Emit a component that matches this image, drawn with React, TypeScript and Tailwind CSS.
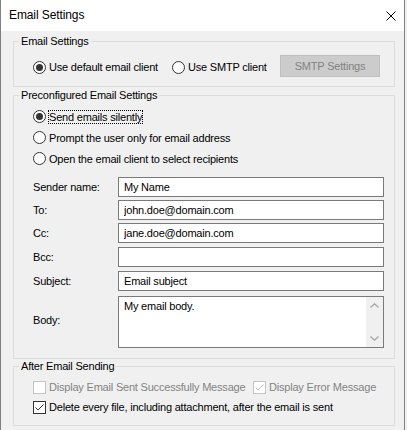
import React from "react";

function Radio({ checked }: { checked?: boolean }) {
  return (
    <svg width="13" height="13" viewBox="0 0 13 13" className="shrink-0">
      <circle cx="6.5" cy="6.5" r="6" fill="#ffffff" stroke="#333333" strokeWidth="1" />
      {checked && <circle cx="6.5" cy="6.5" r="3.5" fill="#333333" />}
    </svg>
  );
}

function Check({ checked, disabled }: { checked?: boolean; disabled?: boolean }) {
  const c = disabled ? "#c4c4c4" : "#333333";
  return (
    <svg width="13" height="13" viewBox="0 0 13 13" className="shrink-0">
      <rect x="0.5" y="0.5" width="12" height="12" fill="#ffffff" stroke={c} strokeWidth="1" />
      {checked && <path d="M2.5 6.5 L5 9 L10.5 3.5" fill="none" stroke={c} strokeWidth="1" />}
    </svg>
  );
}

function RadioRow({ label, checked, focused, className }: { label: string; checked?: boolean; focused?: boolean; className?: string }) {
  return (
    <div className={"flex items-center gap-[2px] " + (className ?? "")}>
      <Radio checked={checked} />
      <span
        className={
          "border leading-[12px] whitespace-nowrap " +
          (focused ? "border-dotted border-black" : "border-transparent")
        }
      >
        {label}
      </span>
    </div>
  );
}

function Field({ label, value, className }: { label: string; value: string; className?: string }) {
  return (
    <div className={"flex items-center " + (className ?? "")}>
      <div className="w-[85px] shrink-0">{label}</div>
      <input
        readOnly
        defaultValue={value}
        className="flex-1 min-w-0 h-[20px] border border-[#7a7a7a] bg-white px-[5px] text-[11px] tracking-[-0.2px] text-black outline-none font-['Liberation_Sans',Arial,sans-serif]"
      />
    </div>
  );
}

export default function App() {
  return (
    <div className="w-[407px] h-[430px] bg-[#f0f0f0] font-['Liberation_Sans',Arial,sans-serif] text-[11px] tracking-[-0.2px] leading-[15px] text-black overflow-hidden">
      <div className="w-[405px] h-full border-l border-r border-[#808080] flex flex-col">
        <div className="h-[31px] shrink-0 bg-white flex items-center justify-between pl-[8px] pr-[8px]">
          <span className="text-[12px] tracking-[-0.1px]">Email Settings</span>
          <svg width="10" height="10" viewBox="0 0 10 10">
            <path d="M0.5 0.5 L9.5 9.5 M9.5 0.5 L0.5 9.5" stroke="#000000" strokeWidth="1" fill="none" />
          </svg>
        </div>
        <div className="flex-1 pl-[12px] pr-[9px]">
          {/* Group 1 */}
          <fieldset className="mt-[3px] border border-[#dcdcdc]">
            <legend className="ml-[5px] px-[2px] h-[15px] leading-[15px]">Email Settings</legend>
            <div className="pl-[19px] pr-[10px] pt-[6px] pb-[9px] flex items-start">
              <RadioRow label="Use default email client" checked className="w-[139px] h-[22px] pt-[2px]" />
              <RadioRow label="Use SMTP client" className="w-[108px] h-[22px] pt-[2px]" />
              <button className="w-[100px] h-[22px] bg-[#cccccc] border border-[#bfbfbf] text-[#838383] text-[11px] leading-[15px]">
                SMTP Settings
              </button>
            </div>
          </fieldset>

          {/* Group 2 */}
          <fieldset className="mt-[1px] border border-[#dcdcdc]">
            <legend className="ml-[5px] px-[2px] h-[15px] leading-[15px]">Preconfigured Email Settings</legend>
            <div className="pl-[19px] pr-[10px] pt-[3px] pb-[10px] flex flex-col">
              <RadioRow label="Send emails silently" checked focused className="h-[21px]" />
              <RadioRow label="Prompt the user only for email address" className="h-[21px]" />
              <RadioRow label="Open the email client to select recipients" className="h-[21px]" />
              <Field label="Sender name:" value="My Name" className="mt-[8px]" />
              <Field label="To:" value="john.doe@domain.com" className="mt-[3px]" />
              <Field label="Cc:" value="jane.doe@domain.com" className="mt-[3px]" />
              <Field label="Bcc:" value="" className="mt-[4px]" />
              <Field label="Subject:" value="Email subject" className="mt-[4px]" />
              <div className="mt-[5px] h-[52px] flex items-center">
                <div className="w-[85px] shrink-0 mb-[3px]">Body:</div>
                <div className="flex-1 h-full border border-[#7a7a7a] bg-white flex">
                  <div className="flex-1 pl-[5px] pt-[2px]">My email body.</div>
                  <div className="w-[17px] bg-[#f0f0f0] flex flex-col justify-between">
                    <div className="h-[17px] flex items-center justify-center">
                      <svg width="9" height="5" viewBox="0 0 9 5">
                        <path d="M0.5 4.5 L4.5 0.8 L8.5 4.5" fill="none" stroke="#a3a3a3" strokeWidth="1.2" />
                      </svg>
                    </div>
                    <div className="h-[17px] flex items-center justify-center">
                      <svg width="9" height="5" viewBox="0 0 9 5">
                        <path d="M0.5 0.5 L4.5 4.2 L8.5 0.5" fill="none" stroke="#a3a3a3" strokeWidth="1.2" />
                      </svg>
                    </div>
                  </div>
                </div>
              </div>
            </div>
          </fieldset>

          {/* Group 3 */}
          <fieldset className="border border-[#dcdcdc]">
            <legend className="ml-[5px] px-[2px] h-[15px] leading-[15px]">After Email Sending</legend>
            <div className="pl-[19px] pr-[10px] pt-[3px] pb-[8px] flex flex-col">
              <div className="h-[20px] flex items-center">
                <div className="w-[220px] flex items-center gap-[3px] text-[#838383]">
                  <Check disabled />
                  <span className="whitespace-nowrap">Display Email Sent Successfully Message</span>
                </div>
                <div className="flex items-center gap-[3px] text-[#838383]">
                  <Check disabled checked />
                  <span className="whitespace-nowrap">Display Error Message</span>
                </div>
              </div>
              <div className="h-[20px] flex items-center gap-[3px]">
                <Check checked />
                <span className="whitespace-nowrap">Delete every file, including attachment, after the email is sent</span>
              </div>
            </div>
          </fieldset>
        </div>
      </div>
    </div>
  );
}
